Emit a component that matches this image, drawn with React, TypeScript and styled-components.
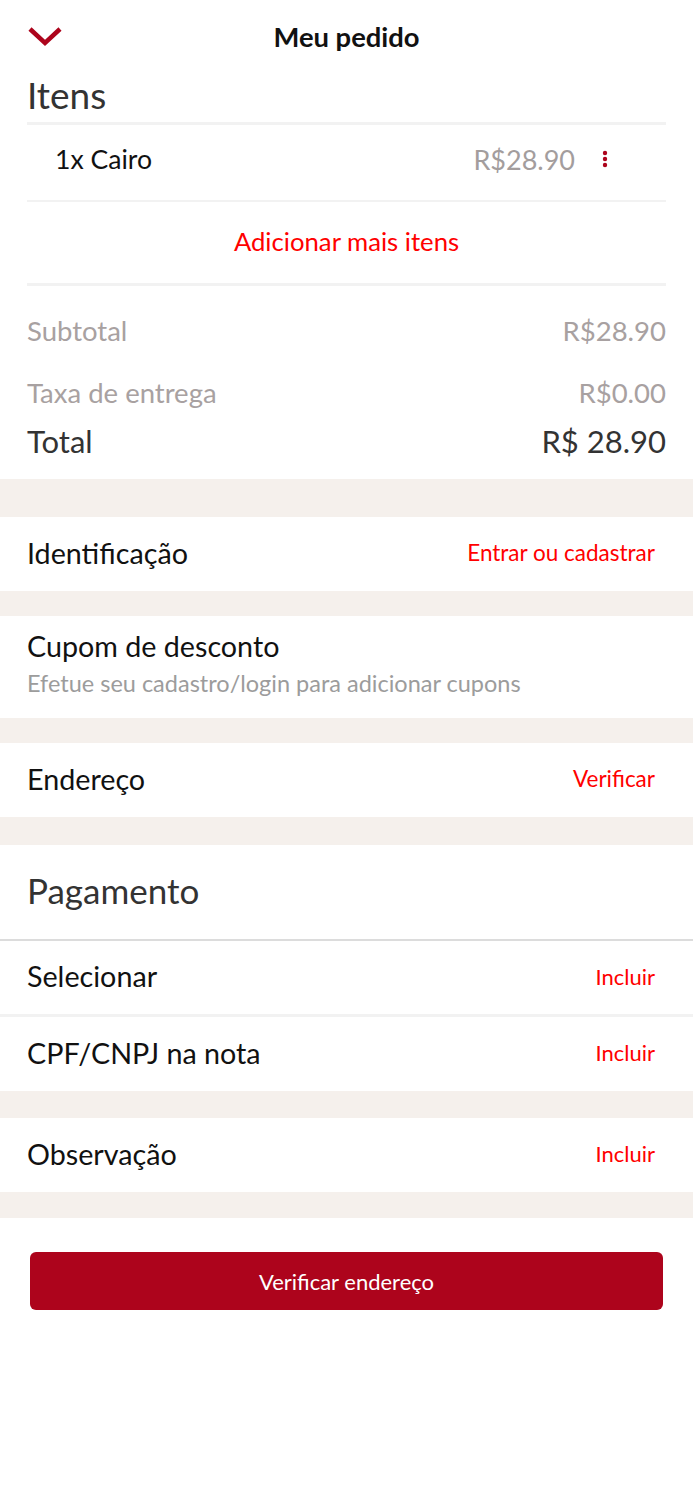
import React from "react";
import styled, { createGlobalStyle } from "styled-components";

const Global = createGlobalStyle`
  html, body { margin: 0; padding: 0; background: #fff; }
  body { font-family: Lato, "Open Sans", sans-serif; color: #111; }
  * { box-sizing: border-box; }
`;

const Page = styled.div`
  width: 693px;
  display: flex;
  flex-direction: column;
`;

const Header = styled.div`
  height: 72px;
  padding: 0 27px;
  display: grid;
  grid-template-columns: 40px 1fr 40px;
  align-items: center;
`;

const Title = styled.h1`
  margin: 0;
  text-align: center;
  font-size: 27.4px;
  font-weight: 700;
  color: #111;
`;

const Block = styled.div`
  background: #fff;
  padding: 0 27px;
`;

const SectionTitle = styled.div`
  font-size: 37px;
  color: #333;
  line-height: 46px;
  padding-bottom: 4px;
`;

const Line = styled.div<{ $h: number; $c?: string }>`
  height: ${(p) => p.$h}px;
  background: ${(p) => p.$c || "#f2f2f2"};
`;

const ItemRow = styled.div`
  height: 75px;
  display: flex;
  align-items: center;
  padding-left: 28px;
  padding-right: 91px;
  padding-bottom: 7px;
  font-size: 26.6px;
`;

const ItemName = styled.span`
  flex: 1;
  color: #111;
`;

const ItemPrice = styled.span`
  color: #a39d9d;
  font-size: 27px;
  position: relative;
`;

const Dots = styled.span`
  position: absolute;
  right: -33px;
  top: -2px;
`;

const AddMore = styled.div`
  height: 81px;
  display: flex;
  align-items: center;
  justify-content: center;
  padding-bottom: 3px;
  color: #ff0000;
  font-size: 25.7px;
`;

const Summary = styled.div`
  padding-top: 27px;
  padding-bottom: 18px;
  display: flex;
  flex-direction: column;
`;

const SumRow = styled.div<{ $h: number; $size: number; $dark?: boolean }>`
  height: ${(p) => p.$h}px;
  display: flex;
  align-items: center;
  justify-content: space-between;
  font-size: ${(p) => p.$size}px;
  color: ${(p) => (p.$dark ? "#333" : "#a8a1a1")};
`;

const Gap = styled.div<{ $h: number }>`
  height: ${(p) => p.$h}px;
  background: #f5f0ec;
`;

const Row = styled.div<{ $h?: number }>`
  height: ${(p) => p.$h ?? 74}px;
  background: #fff;
  padding: 0 38px 3px 27px;
  display: flex;
  align-items: center;
  justify-content: space-between;
`;

const Label = styled.span`
  font-size: 28.7px;
  color: #111;
`;

const Action = styled.span<{ $size?: number }>`
  font-size: ${(p) => p.$size ?? 22}px;
  color: #ff0000;
`;

const Coupon = styled.div`
  height: 102px;
  background: #fff;
  padding: 13px 27px 0;
  display: flex;
  flex-direction: column;
`;

const Sub = styled.div`
  font-size: 23.5px;
  color: #9c9c9c;
  margin-top: 6px;
`;

const PayHead = styled.div`
  height: 96px;
  padding: 0 27px 5px;
  display: flex;
  align-items: center;
  font-size: 35px;
  color: #333;
  border-bottom: 2px solid #dcdcdc;
`;

const Footer = styled.div`
  padding: 34px 30px 0;
  background: #fff;
`;

const Button = styled.button`
  width: 100%;
  height: 58px;
  border: none;
  border-radius: 6px;
  background: #ad041c;
  color: #fff;
  font-family: Lato, sans-serif;
  font-size: 22px;
`;

export default function App() {
  return (
    <Page>
      <Global />
      <Header>
        <svg width="36" height="22" viewBox="0 0 36 22">
          <path d="M3 4 L18 18 L33 4" fill="none" stroke="#ad041c" strokeWidth="4.5" />
        </svg>
        <Title>Meu pedido</Title>
        <span />
      </Header>
      <Block>
        <SectionTitle>Itens</SectionTitle>
        <Line $h={3} />
        <ItemRow>
          <ItemName>1x Cairo</ItemName>
          <ItemPrice>
            R$28.90
            <Dots>
              <svg width="6" height="18" viewBox="0 0 6 18">
                <circle cx="3" cy="3" r="2.2" fill="#ad041c" />
                <circle cx="3" cy="9" r="2.2" fill="#ad041c" />
                <circle cx="3" cy="15" r="2.2" fill="#ad041c" />
              </svg>
            </Dots>
          </ItemPrice>
        </ItemRow>
        <Line $h={2} />
        <AddMore>Adicionar mais itens</AddMore>
        <Line $h={3} />
        <Summary>
          <SumRow $h={34} $size={27.5}>
            <span>Subtotal</span>
            <span>R$28.90</span>
          </SumRow>
          <SumRow $h={30} $size={27.5} style={{ marginTop: 30 }}>
            <span>Taxa de entrega</span>
            <span>R$0.00</span>
          </SumRow>
          <SumRow $h={40} $size={31} $dark style={{ marginTop: 14 }}>
            <span>Total</span>
            <span>R$ 28.90</span>
          </SumRow>
        </Summary>
      </Block>
      <Gap $h={38} />
      <Row>
        <Label>Identificação</Label>
        <Action $size={22.5}>Entrar ou cadastrar</Action>
      </Row>
      <Gap $h={25} />
      <Coupon>
        <Label>Cupom de desconto</Label>
        <Sub>Efetue seu cadastro/login para adicionar cupons</Sub>
      </Coupon>
      <Gap $h={25} />
      <Row>
        <Label>Endereço</Label>
        <Action $size={22.5}>Verificar</Action>
      </Row>
      <Gap $h={28} />
      <PayHead>Pagamento</PayHead>
      <Row $h={73}>
        <Label>Selecionar</Label>
        <Action>Incluir</Action>
      </Row>
      <Line $h={3} />
      <Row>
        <Label>CPF/CNPJ na nota</Label>
        <Action>Incluir</Action>
      </Row>
      <Gap $h={27} />
      <Row>
        <Label>Observação</Label>
        <Action>Incluir</Action>
      </Row>
      <Gap $h={26} />
      <Footer>
        <Button>Verificar endereço</Button>
      </Footer>
    </Page>
  );
}
